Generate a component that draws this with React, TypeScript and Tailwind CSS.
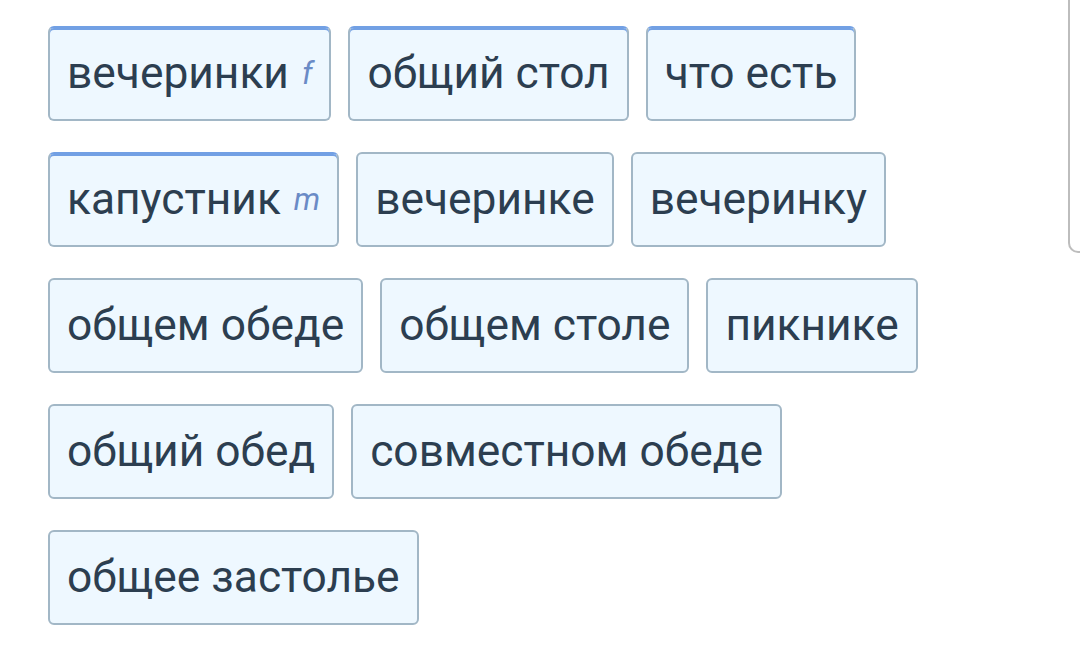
import React from "react";

type Chip = { text: string; tag?: string; accent?: boolean };

const rows: Chip[][] = [
  [
    { text: "вечеринки", tag: "f", accent: true },
    { text: "общий стол", accent: true },
    { text: "что есть", accent: true },
  ],
  [
    { text: "капустник", tag: "m", accent: true },
    { text: "вечеринке" },
    { text: "вечеринку" },
  ],
  [{ text: "общем обеде" }, { text: "общем столе" }, { text: "пикнике" }],
  [{ text: "общий обед" }, { text: "совместном обеде" }],
  [{ text: "общее застолье" }],
];

function ChipView({ chip }: { chip: Chip }) {
  return (
    <div
      className={
        "box-border h-[95px] flex items-center px-[17px] rounded-[6px] border-2 bg-[#eef8ff] text-[#2c3e50] text-[44.3px] whitespace-nowrap " +
        (chip.accent
          ? "border-[#a2b7c6] border-t-[#72a0e4] shadow-[inset_0_2px_0_#72a0e4]"
          : "border-[#a2b7c6]")
      }
    >
      <span>{chip.text}</span>
      {chip.tag && (
        <span className="ml-[13px] mt-[2px] italic text-[31px] text-[#6a8bc6]">
          {chip.tag}
        </span>
      )}
    </div>
  );
}

export default function App() {
  return (
    <div
      className="w-[1080px] h-[654px] bg-white flex overflow-hidden"
      style={{ fontFamily: "Roboto, 'Noto Sans', sans-serif" }}
    >
      <div className="flex-1 pl-[48px] pt-[26px] pr-[20px] flex flex-col gap-[31px]">
        {rows.map((row, ri) => (
          <div key={ri} className="flex gap-[17px]">
            {row.map((c, i) => (
              <ChipView key={i} chip={c} />
            ))}
          </div>
        ))}
      </div>
      <div className="shrink-0 w-[12px] h-[253px] border-l-2 border-b-2 border-[#bdbdbd] rounded-bl-[10px]" />
    </div>
  );
}
